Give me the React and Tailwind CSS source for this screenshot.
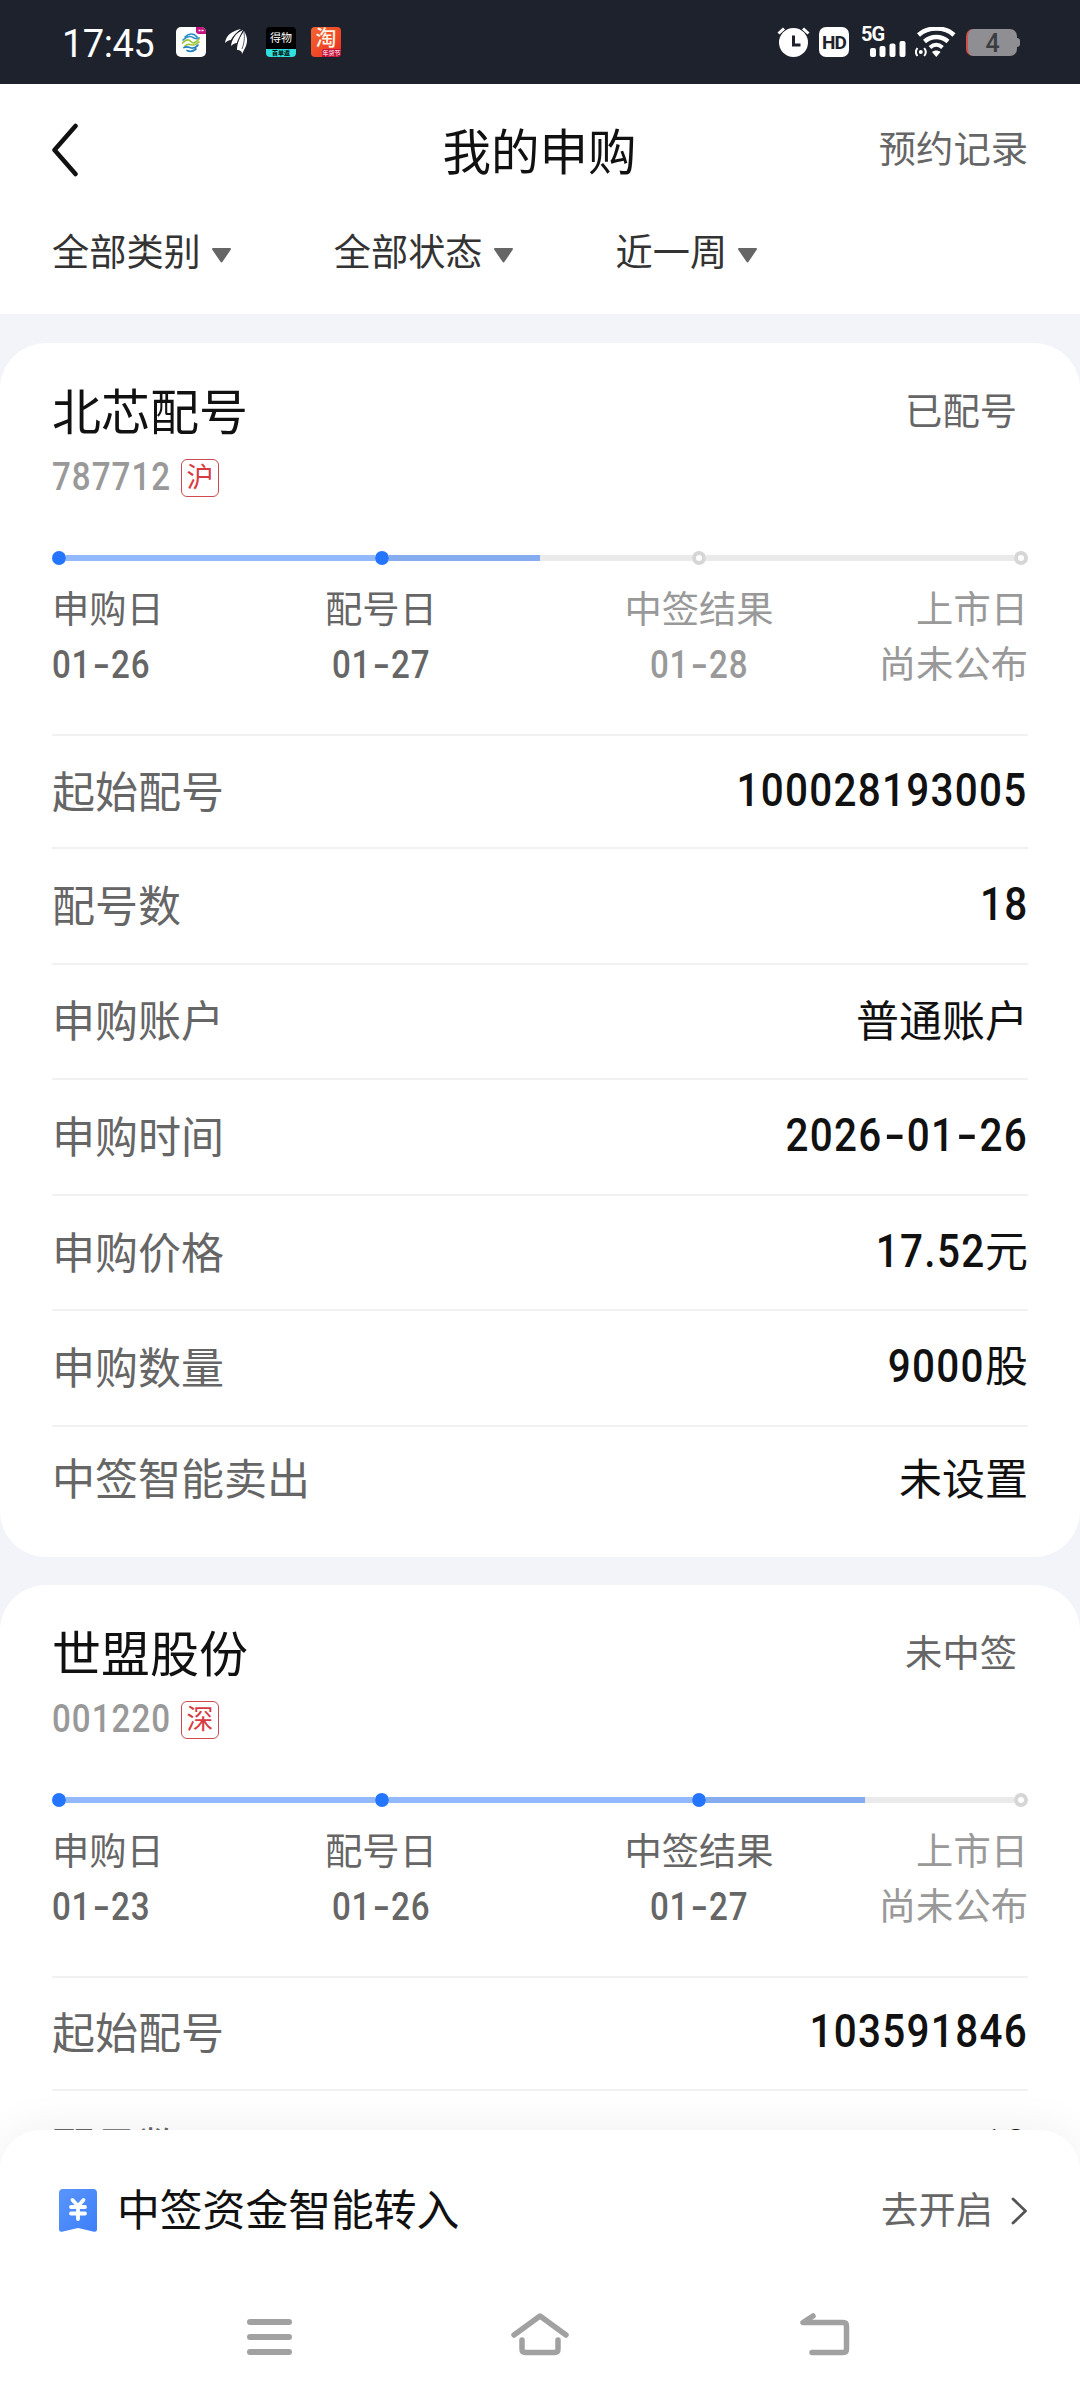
import { Fragment } from 'react';

const records = [
  {
    name: '北芯配号',
    code: '787712',
    market: '沪',
    status: '已配号',
    progress: 'w-[151px]',
    steps: [
      { label: '申购日', date: '01-26', done: true },
      { label: '配号日', date: '01-27', done: true },
      { label: '中签结果', date: '01-28', done: false },
      { label: '上市日', text: '尚未公布', done: false },
    ],
    rows: [
      { label: '起始配号', num: '100028193005' },
      { label: '配号数', num: '18' },
      { label: '申购账户', text: '普通账户' },
      { label: '申购时间', num: '2026-01-26' },
      { label: '申购价格', num: '17.52', text: '元' },
      { label: '申购数量', num: '9000', text: '股' },
      { label: '中签智能卖出', text: '未设置' },
    ],
  },
  {
    name: '世盟股份',
    code: '001220',
    market: '深',
    status: '未中签',
    progress: 'w-[159px]',
    steps: [
      { label: '申购日', date: '01-23', done: true },
      { label: '配号日', date: '01-26', done: true },
      { label: '中签结果', date: '01-27', done: true },
      { label: '上市日', text: '尚未公布', done: false },
    ],
    rows: [
      { label: '起始配号', num: '103591846' },
      { label: '配号数', num: '18' },
      { label: '申购账户', text: '普通账户' },
    ],
  },
];

const filters = ['全部类别', '全部状态', '近一周'];

// narrow digits, with a full-width dash between the groups
const Digits = ({ value, className }) => (
  <span className={`inline-block scale-x-86 font-medium ${className}`}>
    {value.split('-').map((part, i) => (
      <Fragment key={i}>
        {i > 0 && (
          <span className="inline-block w-[0.6em] scale-x-150 text-center tracking-normal">-</span>
        )}
        {part}
      </Fragment>
    ))}
  </span>
);

const StatusBar = () => (
  <div className="flex h-[84px] shrink-0 items-center bg-[#1e222c] pl-[62px] pr-[60px] text-white">
    <span className="w-[114px] text-[38px] leading-[84px] tracking-[-0.500px] pt-1">17:45</span>
    <svg width="30" height="30" viewBox="0 0 30 30">
      <rect width="30" height="30" rx="5" fill="#fff" />
      <path d="M20 0h5a5 5 0 0 1 5 5v2h-7a3 3 0 0 1-3-3z" fill="#c4117e" />
      <path d="M22.500 3.500h5" stroke="#fff" strokeWidth="1.500" strokeDasharray="2 1" />
      <g fill="none" strokeWidth="1.700" strokeLinecap="round">
        <path d="M9 10c4-4 9-4 12 0M7 13c5-5 8-4 11-2 2 1 3 1 5 0" stroke="#2e8fc9" />
        <path d="M6.500 16c5-5 7-3 9-1s5 0 7.500-3M9 19c3-3 6-1 8-1s4-1 6-3" stroke="#9cc53c" />
        <path d="M8 20.500c4-2 6 1 9 .5 3 0 4-2 5-3M11 23.500c3 1.500 6 1 9-1.500" stroke="#1f7fc0" />
      </g>
    </svg>
    <svg className="ml-[19px]" width="22" height="26" viewBox="0 0 22 26" fill="#fff">
      <path d="M0 14C1 6 7 2 16 0 11 4 8 7 6 11c-2 0-4 1-6 3z" />
      <path d="M6 17C7 9 12 3 18 1c-2 5-4 8-6 13-2 0-4 1-6 3z" />
      <path d="M12 21c0-7 3-13 7-19 3 5 4 9 2 15l-4 8c0-3-2-4-5-4z" />
      <path d="M12 15c1-5 4-9 6-13M6 12c2-5 6-9 11-11" fill="none" stroke="#1e222c" strokeWidth="0.800" />
      <path d="M17 20c2-5 3-11 2-17" fill="none" stroke="#1e222c" strokeWidth="0.700" />
    </svg>
    <div className="ml-[19px] flex h-[30px] w-[30px] flex-col items-center overflow-hidden rounded-[4px] bg-black">
      <span className="h-[22px] whitespace-nowrap text-[11px] leading-[24px]">得物</span>
      <span className="h-[8px] w-full whitespace-nowrap bg-[#2fe0dc] text-center text-[6px] font-bold leading-[8px] text-black">
        首单返
      </span>
    </div>
    <div className="ml-[15px] flex h-[30px] w-[30px] flex-col items-end overflow-hidden rounded-[4px] bg-linear-to-br from-[#f4642f] to-[#ea2a22]">
      <span className="h-[22px] w-full text-center text-[21px] font-medium leading-[23px] text-[#fff3e4]">淘</span>
      <span className="h-[8px] w-[19px] whitespace-nowrap rounded-tl-[2px] bg-[#c5123c] text-center text-[6px] leading-[8px]">
        年货节
      </span>
    </div>

    <div className="ml-auto flex items-center">
      <svg width="33" height="30" viewBox="0 0 33 30" fill="none">
        <circle cx="16.500" cy="15.500" r="14.500" fill="#fff" />
        <path d="M1.500 6.500 7 1.500M31.500 6.500 26 1.500" stroke="#fff" strokeWidth="3" />
        <path d="M16.500 8.500v9.500h7" stroke="#1e222c" strokeWidth="3" />
      </svg>
      <span className="ml-[9px] h-[30px] w-[30px] rounded-[7px] bg-white text-center text-[19px] font-bold leading-[31px] tracking-[-1px] text-[#1e222c]">
        HD
      </span>
      <div className="ml-3 flex h-[30px] w-[44px] flex-col">
        <span className="h-[14px] text-[20px] font-bold leading-[15px] tracking-[-1px]">5G</span>
        <svg className="ml-[9px]" width="36" height="16" viewBox="0 0 36 16" fill="#fff">
          <rect y="7" width="6" height="9" rx="2" />
          <rect x="9.500" y="5" width="6" height="11" rx="2" />
          <rect x="19.500" y="2.500" width="6" height="13.500" rx="2" />
          <rect x="29.500" width="6" height="16" rx="2" />
        </svg>
      </div>
      <svg className="ml-[10px]" width="41" height="30" viewBox="0 0 41 30" fill="none" stroke="#fff">
        <path d="M3.500 8C13-.6 30-.6 39 8" strokeWidth="4.500" />
        <path d="M9.500 14.500c7-6 16.500-6 23.500 0" strokeWidth="4.500" />
        <path d="M15 20.500c4-3.500 8.500-3.500 12.500 0" strokeWidth="4" />
        <path d="M17 25c2.500-2 6-2 8.500 0L21.300 30z" fill="#fff" stroke="none" />
        <circle cx="5.800" cy="25" r="2" fill="#fff" stroke="none" />
        <path d="M2.500 21c-2 2.500-2 5.500 0 8M9.200 21c2 2.500 2 5.500 0 8" strokeWidth="2" />
      </svg>
      <div className="ml-[10px] flex items-center">
        <span className="h-[27px] w-[51px] rounded-[7px] border-l-2 border-[#cf4f49] bg-[#8e8e93] text-center text-[25px] font-medium leading-[29px] text-[#3b3c42]">
          4
        </span>
        <span className="h-[9px] w-[3px] rounded-r-sm bg-[#8e8e93]" />
      </div>
    </div>
  </div>
);

const Header = () => (
  <header className="h-[230px] shrink-0 bg-white">
    <div className="flex h-[132px] items-center pr-[52px] pl-[51px]">
      <div className="flex-1">
        <svg width="28" height="54" viewBox="0 0 28 54" fill="none" stroke="#111" strokeWidth="4.500" strokeLinecap="round" strokeLinejoin="round">
          <path d="M24.500 3 3.500 27l21 24" />
        </svg>
      </div>
      <h1 className="pt-[7px] text-[48.500px] leading-[60px] text-[#111]">我的申购</h1>
      <div className="flex-1 text-right text-[37.300px] leading-[48px] text-[#666]">预约记录</div>
    </div>
    <div className="flex gap-[102px] pt-[13px] pl-[52px]">
      {filters.map((name) => (
        <div key={name} className="flex items-center gap-[10px] text-[37.200px] leading-[48px] text-[#333]">
          {name}
          <svg className="mt-[4px]" width="21" height="15" viewBox="0 0 21 15">
            <path d="M2 1h17L10.500 13.500z" fill="#666" stroke="#666" strokeWidth="2" strokeLinejoin="round" />
          </svg>
        </div>
      ))}
    </div>
  </header>
);

const Dot = ({ done }) =>
  done ? (
    <span className="h-[14px] w-[14px] shrink-0 rounded-full bg-[#2475ff]" />
  ) : (
    <span className="h-[14px] w-[14px] shrink-0 rounded-full border-4 border-[#d6d6d6] bg-white" />
  );

const Timeline = ({ steps, progress }) => (
  <div>
    <div className="flex h-[14px] items-center">
      {steps.map((step, i) => {
        const next = steps[i + 1];
        const current = step.done && next && !next.done;
        return (
          <Fragment key={step.label}>
            <Dot done={step.done} />
            {next && (
              <span
                className={`h-[6px] ${i === 1 ? 'w-[303px]' : 'flex-1'} ${
                  step.done && next.done ? 'bg-[#92b9fb]' : 'bg-[#eaeaea]'
                }`}
              >
                {current && <span className={`block h-[6px] bg-[#85acef] ${progress}`} />}
              </span>
            )}
          </Fragment>
        );
      })}
    </div>
    <div className="mt-[18px] grid grid-cols-[170px_318px_318px_170px]">
      {steps.map((step, i) => (
        <div
          key={step.label}
          className={`flex flex-col items-center whitespace-nowrap first:items-start last:items-end ${
            step.done ? 'text-[#666]' : 'text-[#999]'
          }`}
        >
          <span className="text-[37.300px] leading-[54px]">{step.label}</span>
          {step.date ? (
            <Digits
              value={step.date}
              className={`text-[38.500px] leading-[56px] tracking-[0.900px] ${i === 0 ? 'origin-left' : ''}`}
            />
          ) : (
            <span className="text-[37.300px] leading-[56px]">{step.text}</span>
          )}
        </div>
      ))}
    </div>
  </div>
);

const RecordCard = ({ record }) => (
  <section className="shrink-0 rounded-[46px] bg-white px-[52px] pt-[39px] pb-[25px]">
    <div className="flex items-center justify-between pr-[11px]">
      <h2 className="text-[49px] leading-[64px] text-[#111]">{record.name}</h2>
      <span className="pb-[3px] text-[37.300px] leading-[61px] text-[#666]">{record.status}</span>
    </div>
    <div className="mt-[6px] flex h-[50px] items-center">
      <span className="w-[129px] text-[#999]">
        <Digits value={record.code} className="origin-left text-[38.500px] leading-[50px] tracking-[1.200px]" />
      </span>
      <span className="mt-[2px] h-[38px] w-[38px] rounded-[6px] border-[1.500px] border-[#cc4a50] text-center text-[27px] leading-[37px] text-[#d93a42]">
        {record.market}
      </span>
    </div>
    <div className="mt-[49px] h-[183px]">
      <Timeline steps={record.steps} progress={record.progress} />
    </div>
    <dl>
      {record.rows.map((row) => (
        <div
          key={row.label}
          className="flex h-[115.600px] items-center justify-between border-t-2 border-[#f1f1f1] pt-[2px] text-[43px] leading-[60px] first:h-[113px] last:h-[107px]"
        >
          <dt className="text-[#666]">{row.label}</dt>
          <dd className={`text-[#111] ${row.num ? 'pb-[5px]' : ''}`}>
            {row.num && (
              <Digits value={row.num} className="origin-right text-[47px] leading-[60px] tracking-[1.500px]" />
            )}
            {row.text}
          </dd>
        </div>
      ))}
    </dl>
  </section>
);

const BottomSheet = () => (
  <div className="absolute inset-x-0 bottom-0 h-[270px] rounded-t-[40px] bg-white shadow-[0_-4px_40px_rgba(0,0,0,0.06)]">
    <div className="flex h-[160px] items-center px-[52px]">
      <svg className="ml-[7px]" width="38" height="43" viewBox="0 0 38 43">
        <defs>
          <linearGradient id="ticket" x1="0" y1="0" x2="1" y2="1">
            <stop offset="0" stopColor="#5a95fb" />
            <stop offset="1" stopColor="#3d7ffa" />
          </linearGradient>
        </defs>
        <path d="M4 0h30a4 4 0 0 1 4 4v36c0 3-2 3-4 2.500L19 39 4 42.500C2 43 0 43 0 40V4a4 4 0 0 1 4-4z" fill="url(#ticket)" />
        <path d="m13.500 11 5.500 6 5.500-6M12 18h14M12 24.500h14M19 18v12" fill="none" stroke="#fff" strokeWidth="3.800" strokeLinecap="round" />
      </svg>
      <span className="ml-[20px] pt-[2px] text-[42.800px] leading-[60px] text-[#111]">中签资金智能转入</span>
      <span className="ml-auto pt-[2px] text-[37.300px] leading-[60px] text-[#666]">去开启</span>
      <svg className="ml-[18px] mt-[2px]" width="17" height="28" viewBox="0 0 17 28" fill="none" stroke="#555" strokeWidth="2.800" strokeLinecap="round" strokeLinejoin="round">
        <path d="m2 2 12.500 12L2 26" />
      </svg>
    </div>
    <nav className="flex h-[88px] items-center pl-[247px]">
      <svg width="45" height="44" viewBox="0 0 45 44" stroke="#a1a1a1" strokeWidth="6" strokeLinecap="round">
        <path d="M3 10h39M3 25h39M3 40h39" />
      </svg>
      <svg className="ml-[219px]" width="58" height="44" viewBox="0 0 58 44" fill="none" stroke="#a1a1a1" strokeWidth="5.500" strokeLinecap="round" strokeLinejoin="round">
        <path d="M3 23 29 4l26 19" />
        <path d="M11 28v9q0 3.500 3.500 3.500h29q3.500 0 3.500-3.500v-9" />
      </svg>
      <svg className="ml-[231px]" width="50" height="44" viewBox="0 0 50 44" fill="none" stroke="#a1a1a1" strokeWidth="5.500" strokeLinecap="round" strokeLinejoin="round">
        <path d="M13 4 3 10.500h40q3.500 0 3.500 3.500v23q0 3.500-3.500 3.500H12" />
      </svg>
    </nav>
  </div>
);

const App = () => (
  <div className="relative flex h-[2400px] w-[1080px] flex-col overflow-hidden bg-[#f3f4f9] font-[Roboto,'Noto_Sans_CJK_SC',sans-serif]">
    <StatusBar />
    <Header />
    <main className="mt-[29px] flex flex-col gap-[28px]">
      {records.map((record) => (
        <RecordCard key={record.code} record={record} />
      ))}
    </main>
    <BottomSheet />
  </div>
);

export default App;
